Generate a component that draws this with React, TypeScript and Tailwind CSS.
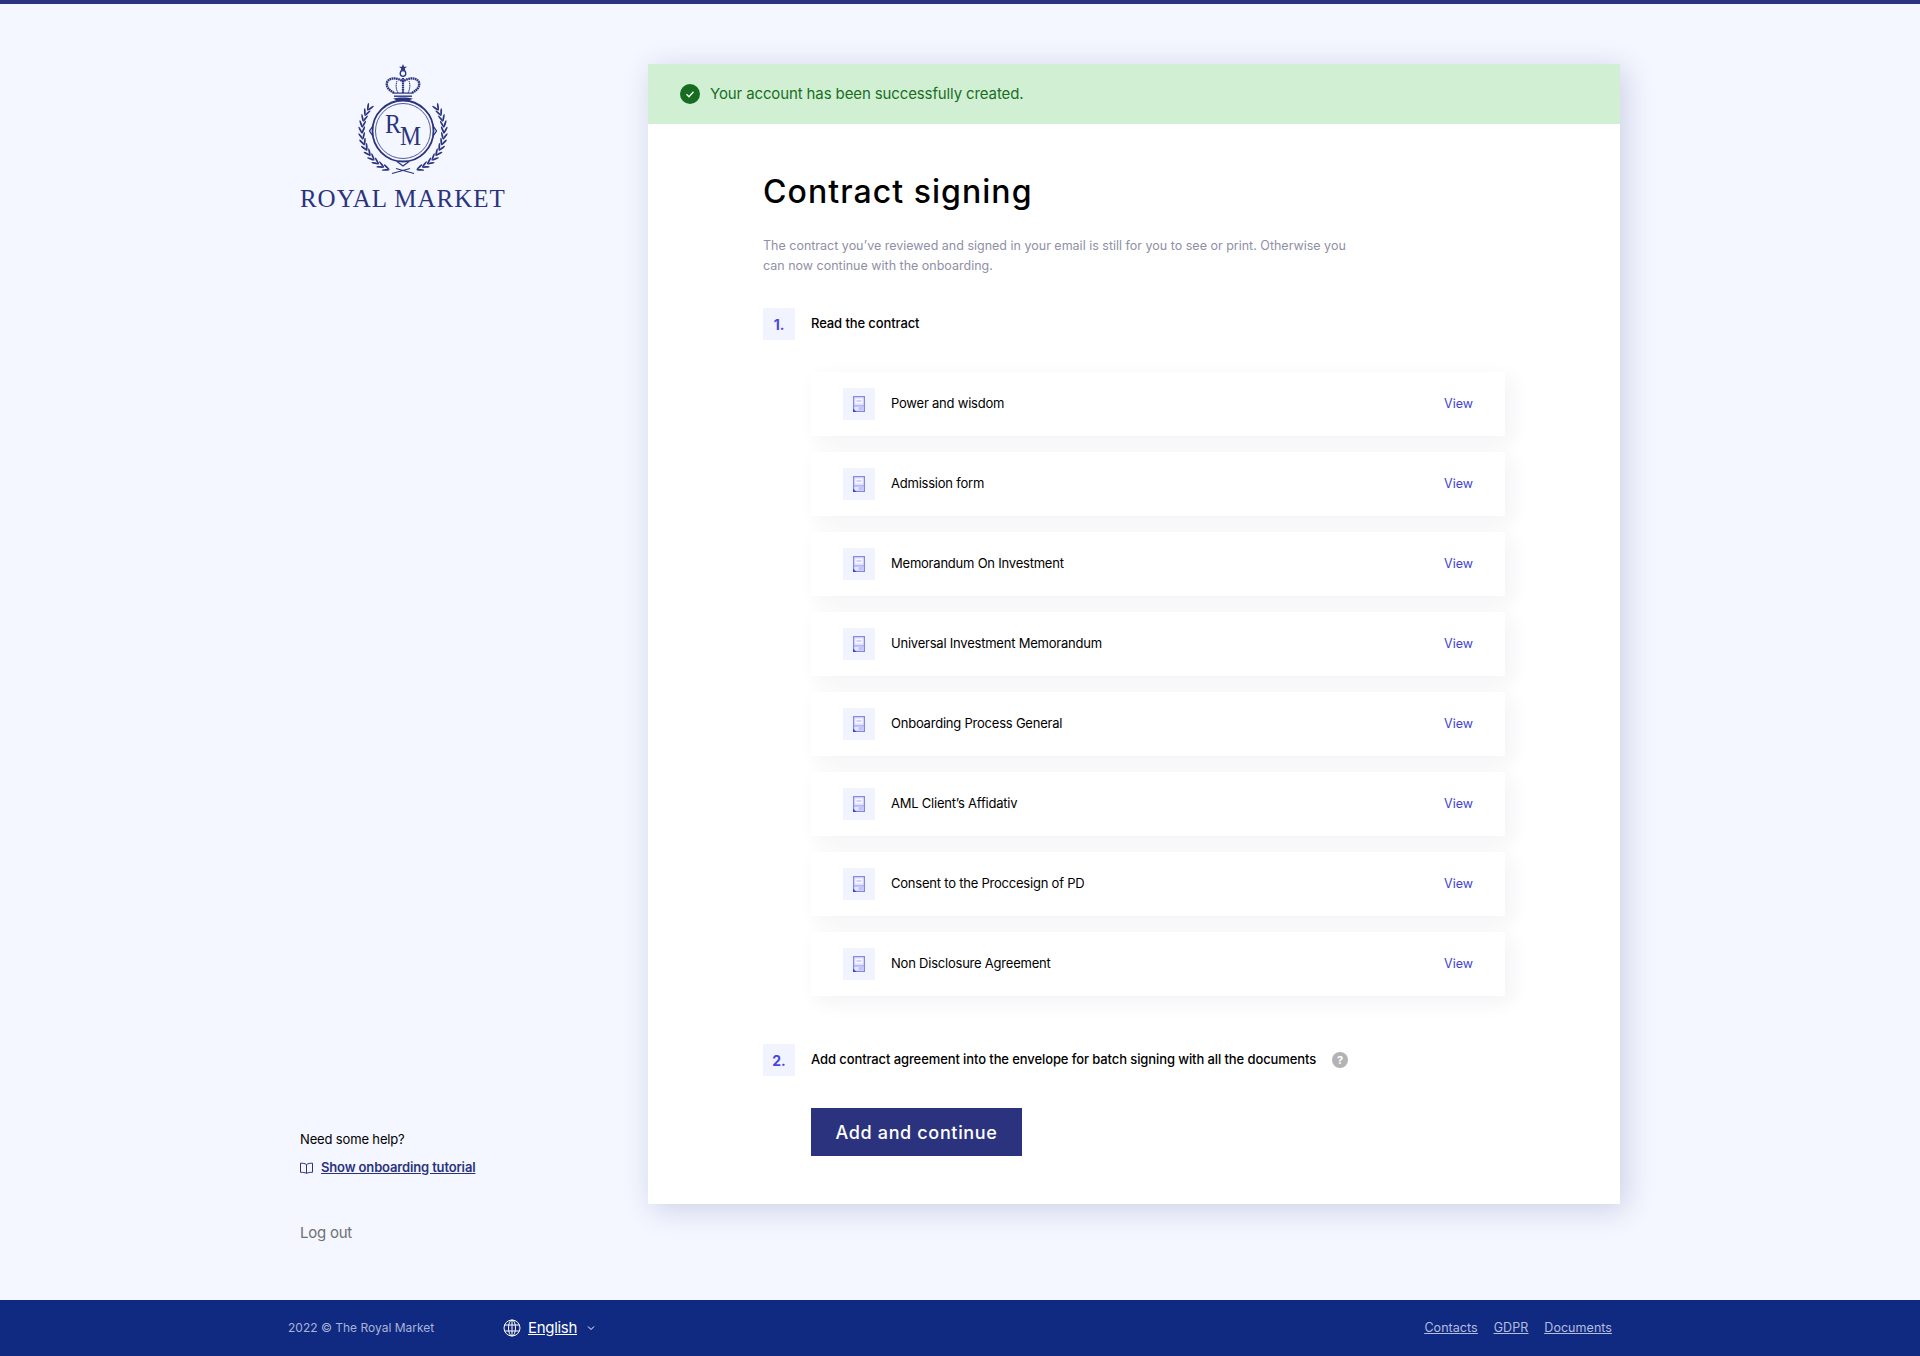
const docs = [
  "Power and wisdom",
  "Admission form",
  "Memorandum On Investment",
  "Universal Investment Memorandum",
  "Onboarding Process General",
  "AML Client’s Affidativ",
  "Consent to the Proccesign of PD",
  "Non Disclosure Agreement",
];

function Laurel({ side }: { side: 1 | -1 }) {
  const leaves = [];
  const r = 41;
  for (let i = 0; i < 13; i++) {
    const deg = 20 + i * 8.4;
    const t = (deg * Math.PI) / 180;
    const px = 55 - side * Math.sin(t) * r;
    const py = 71 + Math.cos(t) * r;
    const tang = (Math.atan2(-Math.sin(t), -side * Math.cos(t)) * 180) / Math.PI;
    leaves.push(
      <g key={i} transform={`translate(${px.toFixed(2)} ${py.toFixed(2)}) rotate(${tang.toFixed(1)})`}>
        <ellipse cx="3" cy="-1.500" rx="3.800" ry="0.900" transform="rotate(-24 3 -1.500)" />
        <ellipse cx="3" cy="1.500" rx="3.800" ry="0.900" transform="rotate(24 3 1.500)" />
      </g>
    );
  }
  return <g fill="#2b337f">{leaves}</g>;
}

function Emblem() {
  return (
    <svg width="110" height="116" viewBox="0 4 110 116" className="shrink-0">
      <path d="M55 4l1.100 2.700 2.900.1-2.300 1.800.8 2.800-2.500-1.600-2.500 1.600.8-2.800-2.300-1.800 2.900-.1z" fill="#2b337f" />
      <circle cx="55" cy="13.500" r="2.800" fill="none" stroke="#2b337f" strokeWidth="1.300" />
      <g fill="none" stroke="#2b337f" strokeDasharray="1.700 .5">
        <path d="M46 33C41 30 38 27 39 22.500C40.500 17.500 49 17 55 21.500" strokeWidth="2.400" />
        <path d="M64 33C69 30 72 27 71 22.500C69.500 17.500 61 17 55 21.500" strokeWidth="2.400" />
        <path d="M55 18V33" strokeWidth="2.200" />
        <path d="M50 33C48 29 47.500 25 49 21" strokeWidth="1" />
        <path d="M60 33C62 29 62.500 25 61 21" strokeWidth="1" />
      </g>
      <rect x="46" y="32.500" width="18" height="1.200" fill="#2b337f" />
      <rect x="46" y="35.500" width="18" height="1.400" fill="#2b337f" />
      <path d="M45 38.500C50 37 60 37 65 38.500L60 41.200L55 40L50 41.200Z" fill="#2b337f" />
      <circle cx="55" cy="71" r="30.500" fill="none" stroke="#2b337f" strokeWidth="1.800" />
      <circle cx="55" cy="71" r="27.500" fill="none" stroke="#2b337f" strokeWidth="0.800" />
      <path d="M24.500 66.500L21.500 71L24.500 75.500M85.500 66.500L88.500 71L85.500 75.500" fill="none" stroke="#2b337f" strokeWidth="1.300" />
      <path d="M49 101.500L55 106L61 101.500" fill="none" stroke="#2b337f" strokeWidth="1.300" />
      <text x="37" y="73" fontFamily="'Liberation Serif', serif" fontSize="27" textLength="16" lengthAdjust="spacingAndGlyphs" fill="#2b337f">R</text>
      <text x="52" y="84.500" fontFamily="'Liberation Serif', serif" fontSize="27" textLength="21" lengthAdjust="spacingAndGlyphs" fill="#2b337f">M</text>
      <Laurel side={1} />
      <Laurel side={-1} />
      <path d="M44 113.500L62 108.500M66 113.500L48 108.500" stroke="#2b337f" strokeWidth="1.100" fill="none" />
    </svg>
  );
}

function DocIcon() {
  return (
    <svg width="12" height="16" viewBox="0 0 12 16">
      <rect x=".6" y=".6" width="10.800" height="14.800" fill="#e6e7fc" stroke="#8387ec" strokeWidth="1.200" />
      <rect x="2.500" y="3" width="7" height="4" fill="#fbfbff" />
      <rect x="3.500" y="4.500" width="5" height="1" fill="#a9acf1" />
      <rect x="1" y="9.500" width="10" height=".8" fill="#8387ec" />
      <rect x="5.500" y="11" width="5" height="3" fill="#c3c5f7" />
      <path d="M0 12.500L3.500 16H0Z" fill="#4245d0" />
    </svg>
  );
}

function Step({ n, children }: { n: string; children: React.ReactNode }) {
  return (
    <div className="flex items-center gap-4">
      <div className="w-8 h-8 bg-[#f1f3ff] flex items-center justify-center text-[14px] font-bold text-[#4a45e0]">{n}</div>
      {children}
    </div>
  );
}

export default function App() {
  return (
    <div className="min-h-[1356px] flex flex-col bg-[#f4f7ff] border-t-4 border-[#2b337f] font-['Inter',sans-serif]">
      <main className="flex-1 flex pt-[60px] pl-[300px]">
        <aside className="w-[348px] shrink-0 flex flex-col justify-between pb-[56px]">
          <div className="w-[205px] flex flex-col items-center">
            <Emblem />
            <div className="mt-[4px] w-full text-center text-[25px] leading-[30px] whitespace-nowrap text-[#2b337f] font-['Liberation_Serif',serif] tracking-[0.95px]">ROYAL MARKET</div>
          </div>
          <div>
            <div className="text-[13px] leading-[20px] text-black tracking-[-0.15px]">Need some help?</div>
            <div className="mt-[9px] flex items-center gap-2 h-5">
              <svg width="13" height="12" viewBox="0 0 13 12" fill="none" stroke="#2b337f" strokeWidth="1">
                <path d="M6.500 2.500C5 1.500 3 1.200 .5 1.200V10.300C3 10.300 5 10.600 6.500 11.300C8 10.600 10 10.300 12.500 10.300V1.200C10 1.200 8 1.500 6.500 2.500ZM6.500 2.500V11.300" />
              </svg>
              <a className="text-[13px] font-semibold text-[#2b337f] underline tracking-[-0.15px]">Show onboarding tutorial</a>
            </div>
            <div className="mt-[44px] text-[15px] leading-[22px] text-[#707070] tracking-[-0.25px]">Log out</div>
          </div>
        </aside>
        <section className="w-[972px] h-[1140px] bg-white shadow-[5px_5px_28px_rgba(43,51,127,0.2)]">
          <div className="h-[60px] bg-[#d1f0d3] flex items-center pl-[32px] gap-[10px]">
            <svg width="20" height="20" viewBox="0 0 20 20">
              <circle cx="10" cy="10" r="10" fill="#166d1f" />
              <path d="M6.500 10.300L9 12.700L13.500 7.800" fill="none" stroke="#fff" strokeWidth="1.300" />
            </svg>
            <span className="text-[15px] text-[#1a6e24] tracking-[-0.12px]">Your account has been successfully created.</span>
          </div>
          <div className="px-[115px] pt-[48px]">
            <h1 className="text-[32px] leading-[40px] font-medium text-black tracking-[1.05px]">Contract signing</h1>
            <p className="mt-[24px] w-[600px] text-[12.5px] leading-[20px] text-[#8f8fa6]">
              The contract you’ve reviewed and signed in your email is still for you to see or print. Otherwise you can now continue with the onboarding.
            </p>
            <div className="mt-[32px]">
              <Step n="1.">
                <span className="text-[13px] font-medium text-black tracking-[-0.1px]">Read the contract</span>
              </Step>
            </div>
            <div className="mt-[32px] ml-[48px] flex flex-col gap-4">
              {docs.map((d) => (
                <div key={d} className="h-16 bg-white shadow-[6px_6px_20px_rgba(30,40,90,0.06)] flex items-center px-8">
                  <div className="w-8 h-8 bg-[#f1f3ff] flex items-center justify-center"><DocIcon /></div>
                  <span className="ml-4 flex-1 text-[13px] text-black tracking-[-0.22px]">{d}</span>
                  <a className="text-[12.5px] text-[#3f3fd8]">View</a>
                </div>
              ))}
            </div>
            <div className="mt-12">
              <Step n="2.">
                <span className="text-[13px] font-medium text-black tracking-[-0.1px]">Add contract agreement into the envelope for batch signing with all the documents</span>
                <span className="w-4 h-4 rounded-full bg-[#b3b3b3] text-white text-[11px] font-bold flex items-center justify-center">?</span>
              </Step>
            </div>
            <button className="block mt-8 ml-[48px] w-[211px] h-12 bg-[#2b337f] text-white text-[18px] font-medium tracking-[0.65px]">Add and continue</button>
          </div>
        </section>
      </main>
      <footer className="h-14 bg-[#0f2a80] pl-[288px] pr-[308px] flex items-center text-[12px]">
        <span className="w-[215px] text-[#a9b3da]">2022 © The Royal Market</span>
        <svg width="18" height="18" viewBox="0 0 18 18" fill="none" stroke="#fff" strokeWidth="1">
          <circle cx="9" cy="9" r="8" />
          <ellipse cx="9" cy="9" rx="3.500" ry="8" />
          <path d="M9 1V17M1.500 6H16.500M1.500 12H16.500" />
        </svg>
        <span className="ml-[7px] text-[15px] text-white underline tracking-[-0.3px]">English</span>
        <svg className="ml-[10px]" width="8" height="6" viewBox="0 0 8 6" fill="none" stroke="#fff" strokeWidth="1"><path d="M1 1.500L4 4.500L7 1.500" /></svg>
        <div className="ml-auto flex gap-4 text-[12.5px] tracking-[0.05px] text-[#b5bde0] underline">
          <a>Contacts</a>
          <a>GDPR</a>
          <a>Documents</a>
        </div>
      </footer>
    </div>
  );
}
